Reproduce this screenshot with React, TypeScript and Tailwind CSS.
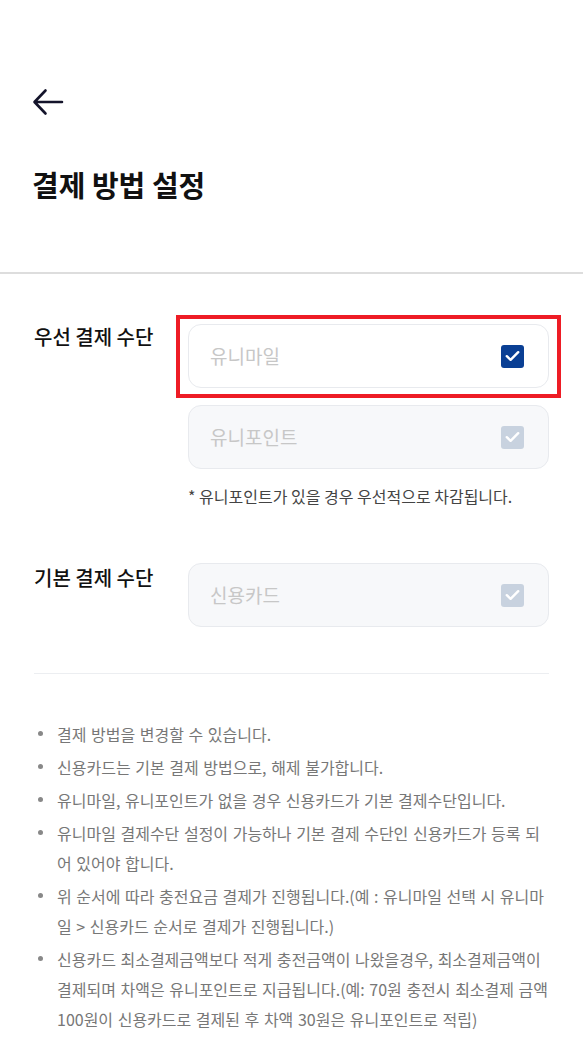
import React from "react";

const font = { fontFamily: '"Noto Sans CJK KR", "Noto Sans", sans-serif' };

const Check = ({ active }: { active: boolean }) => (
  <span
    className={`flex h-[23px] w-[23px] items-center justify-center rounded-[3px] ${
      active ? "bg-[#0a3f94]" : "bg-[#c8d2df]"
    }`}
  >
    <svg width="15" height="12" viewBox="0 0 15 12" fill="none">
      <path
        d="M1.8 6.2 L5.6 9.8 L13.2 2.2"
        stroke="white"
        strokeWidth="2.4"
        strokeLinecap="round"
        strokeLinejoin="round"
      />
    </svg>
  </span>
);

const Option = ({ label, active }: { label: string; active: boolean }) => (
  <div
    className={`flex h-[64px] items-center justify-between rounded-[13px] border border-[#e8eaee] pl-[21px] pr-[24px] ${
      active ? "bg-white" : "bg-[#f7f8fa]"
    }`}
  >
    <span className="text-[19px] text-[#c7c7c7]">{label}</span>
    <Check active={active} />
  </div>
);

const notes = [
  "결제 방법을 변경할 수 있습니다.",
  "신용카드는 기본 결제 방법으로, 해제 불가합니다.",
  "유니마일, 유니포인트가 없을 경우 신용카드가 기본 결제수단입니다.",
  "유니마일 결제수단 설정이 가능하나 기본 결제 수단인 신용카드가 등록 되어 있어야 합니다.",
  "위 순서에 따라 충전요금 결제가 진행됩니다.(예 : 유니마일 선택 시 유니마일 > 신용카드 순서로 결제가 진행됩니다.)",
  "신용카드 최소결제금액보다 적게 충전금액이 나왔을경우, 최소결제금액이 결제되며 차액은 유니포인트로 지급됩니다.(예: 70원 충전시 최소결제 금액 100원이 신용카드로 결제된 후 차액 30원은 유니포인트로 적립)",
];

export default function App() {
  return (
    <div className="min-h-[1054px] w-[583px] bg-white" style={font}>
      <div className="px-[32px] pt-[86px]">
        <svg width="32" height="32" viewBox="0 0 32 32" fill="none">
          <path
            d="M30 16 H3 M13.5 4.5 L2.5 16 L13.5 27.5"
            stroke="#14142b"
            strokeWidth="2.6"
            strokeLinecap="round"
            strokeLinejoin="round"
          />
        </svg>
        <h1 className="mt-[46px] text-[29px] font-bold leading-[40px] text-[#111]">
          결제 방법 설정
        </h1>
      </div>
      <div className="mt-[68px] h-[2px] bg-[#dddddd]" />

      <div className="px-[34px] pt-[50px]">
        <div className="flex">
          <div className="w-[154px] -mt-[1px] text-[20px] font-medium leading-[28px] text-[#111]">
            우선 결제 수단
          </div>
          <div className="flex flex-1 flex-col gap-[17px]">
            <div className="relative">
              <Option label="유니마일" active />
              <div className="pointer-events-none absolute -left-[12px] -right-[12px] -top-[9px] -bottom-[10px] border-[4px] border-[#ee1c25]" />
            </div>
            <Option label="유니포인트" active={false} />
            <p className="mt-[-1px] text-[16px] leading-[22px] text-[#444]">
              * 유니포인트가 있을 경우 우선적으로 차감됩니다.
            </p>
          </div>
        </div>

        <div className="mt-[56px] flex">
          <div className="w-[154px] pt-[1px] text-[20px] font-medium leading-[28px] text-[#111]">
            기본 결제 수단
          </div>
          <div className="flex-1">
            <Option label="신용카드" active={false} />
          </div>
        </div>

        <div className="mt-[46px] h-px bg-[#eceef1]" />

        <ul className="mt-[45px] flex flex-col gap-[3px]">
          {notes.map((n) => (
            <li
              key={n}
              className="flex text-[16px] leading-[30px] text-[#777] break-all [word-spacing:1px]"
            >
              <span className="flex w-[23px] shrink-0 pt-[12px] pl-[4px]">
                <span className="h-[5px] w-[5px] rounded-full bg-[#888]" />
              </span>
              <span>{n}</span>
            </li>
          ))}
        </ul>
      </div>
    </div>
  );
}
